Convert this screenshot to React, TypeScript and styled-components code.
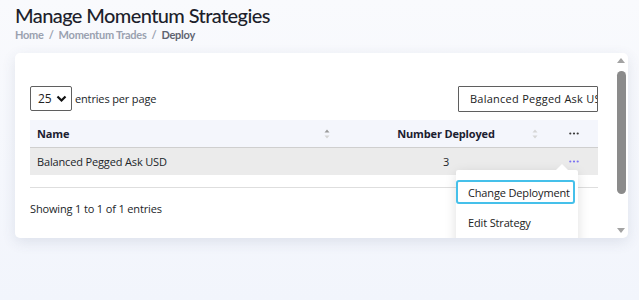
import React from "react";
import styled, { createGlobalStyle } from "styled-components";

const Global = createGlobalStyle`
  html, body { margin: 0; padding: 0; }
  body {
    background: linear-gradient(180deg, #f9fafd 0%, #f2f5fc 100%);
    min-height: 300px;
    font-family: "Open Sans", "Liberation Sans", sans-serif;
    color: #212529;
  }
  * { box-sizing: border-box; }
`;

const Page = styled.div`
  padding: 3px 11px 0 15px;
`;

const Title = styled.h1`
  margin: 0;
  font-family: Lato, "Open Sans", sans-serif;
  font-weight: 500;
  font-size: 20px;
  letter-spacing: -0.6px;
  line-height: 24px;
  color: #1d1f2c;
`;

const Crumbs = styled.nav`
  display: flex;
  gap: 5px;
  margin-top: 1px;
  font-family: Lato, "Open Sans", sans-serif;
  font-size: 11px;
  letter-spacing: -0.25px;
  line-height: 14px;
  color: #959dad;
`;

const Crumb = styled.span<{ $active?: boolean }>`
  color: ${(p) => (p.$active ? "#5e6370" : "#9aa1b0")};
  font-weight: 700;
`;

const Card = styled.section`
  margin-top: 11px;
  width: 613px;
  height: 185px;
  display: flex;
  background: #fff;
  border-radius: 5px;
  box-shadow: 0 4px 14px rgba(60, 72, 110, 0.12);
`;

const CardBody = styled.div`
  flex: 1;
  min-width: 0;
  overflow: hidden;
  padding: 33px 15px 0 15px;
  border-radius: 5px 0 0 5px;
`;

const Scrollbar = styled.div`
  width: 15px;
  flex: none;
  display: flex;
  flex-direction: column;
  align-items: center;
  padding: 5px 0 5px 1px;
`;

const Arrow = styled.div<{ $dir: "up" | "down" }>`
  width: 0;
  height: 0;
  border-left: 4px solid transparent;
  border-right: 4px solid transparent;
  ${(p) =>
    p.$dir === "up"
      ? "border-bottom: 5px solid #a3a3a3;"
      : "border-top: 5px solid #a3a3a3;"}
  margin: ${(p) => (p.$dir === "up" ? "0 0 8px" : "auto 0 0")};
`;

const Thumb = styled.div`
  width: 9px;
  height: 123px;
  border-radius: 5px;
  background: #8b8b8b;
`;

const Toolbar = styled.div`
  display: flex;
  align-items: center;
  justify-content: space-between;
  height: 25px;
`;

const Length = styled.label`
  display: flex;
  align-items: center;
  gap: 3px;
  font-size: 11px;
  letter-spacing: -0.15px;
  color: #212529;
`;

const SelectBox = styled.div`
  display: flex;
  align-items: center;
  justify-content: space-between;
  width: 42px;
  height: 25px;
  padding: 0 4px 0 7px;
  border: 1px solid #5f5f5f;
  border-radius: 2px;
  font-size: 12px;
  color: #222;
`;

const Search = styled.input`
  width: 140px;
  height: 26px;
  padding: 0 0 0 11px;
  border: 1px solid #5f5f5f;
  border-radius: 1px;
  font-family: "Open Sans", "Liberation Sans", sans-serif;
  font-size: 11px;
  letter-spacing: 0.25px;
  color: #222;
  background: #fff;
  outline: none;
`;

const TableWrap = styled.div`
  margin-top: 9px;
  border-bottom: 1px solid #dedede;
  padding-bottom: 12px;
`;

const Grid = styled.div<{ $head?: boolean }>`
  display: grid;
  grid-template-columns: 310px 212px 46px;
  align-items: center;
  height: ${(p) => (p.$head ? "28px" : "27px")};
  background: ${(p) => (p.$head ? "#f4f6fc" : "#ebebeb")};
  border-bottom: ${(p) => (p.$head ? "1px solid #cfcfcf" : "none")};
  font-size: 11px;
  letter-spacing: -0.15px;
  font-weight: ${(p) => (p.$head ? 700 : 400)};
  color: ${(p) => (p.$head ? "#1b2030" : "#212529")};
`;

const Cell = styled.div<{ $align?: "left" | "center" }>`
  position: relative;
  display: flex;
  align-items: center;
  justify-content: ${(p) => (p.$align === "center" ? "center" : "flex-start")};
  padding-left: ${(p) => (p.$align === "center" ? "0" : "7px")};
  height: 100%;
`;

const SortSlot = styled.span<{ $right: number }>`
  position: absolute;
  right: ${(p) => p.$right}px;
  top: 50%;
  transform: translateY(-50%);
  display: flex;
`;

const ActionCell = styled.div`
  position: relative;
  display: flex;
  align-items: center;
  justify-content: flex-end;
  padding-right: 19px;
  height: 100%;
`;

const Menu = styled.div`
  position: absolute;
  top: 22px;
  right: 20px;
  width: 122px;
  padding: 10px 3px 20px 0;
  background: #fff;
  border-radius: 2px;
  box-shadow: 0 3px 12px rgba(0, 0, 0, 0.13);
  z-index: 2;
  &::before {
    content: "";
    position: absolute;
    top: -6px;
    right: 10px;
    border-left: 6px solid transparent;
    border-right: 6px solid transparent;
    border-bottom: 6px solid #fff;
  }
`;

const MenuItem = styled.div<{ $focused?: boolean }>`
  height: 24px;
  display: flex;
  align-items: center;
  padding-left: ${(p) => (p.$focused ? "10px" : "12px")};
  margin-bottom: 6px;
  font-size: 11px;
  letter-spacing: -0.15px;
  color: #222;
  white-space: nowrap;
  border: ${(p) => (p.$focused ? "2px solid #45c0ea" : "none")};
  border-radius: 3px;
`;

const Footer = styled.div`
  margin-top: 13px;
  font-size: 11px;
  letter-spacing: -0.15px;
  color: #212529;
`;

const SortIcon = ({ up, down }: { up: string; down: string }) => (
  <svg width="6" height="12" viewBox="0 0 6 12">
    <path d="M0.5 4.5 L3 1.5 L5.5 4.5 Z" fill={up} />
    <path d="M0.5 7.5 L3 10.5 L5.5 7.5 Z" fill={down} />
  </svg>
);

const DotsIcon = ({ color }: { color: string }) => (
  <svg width="10" height="3" viewBox="0 0 10 3">
    <circle cx="1.3" cy="1.5" r="1.1" fill={color} />
    <circle cx="5" cy="1.5" r="1.1" fill={color} />
    <circle cx="8.7" cy="1.5" r="1.1" fill={color} />
  </svg>
);

const Chevron = () => (
  <svg width="11" height="8" viewBox="0 0 11 8">
    <path d="M1.5 1.5 L5.5 5.5 L9.5 1.5" stroke="#111" strokeWidth="2.2" fill="none" />
  </svg>
);

export default function App() {
  return (
    <>
      <Global />
      <Page>
        <Title>Manage Momentum Strategies</Title>
        <Crumbs>
          <Crumb>Home</Crumb>
          <Crumb>/</Crumb>
          <Crumb>Momentum Trades</Crumb>
          <Crumb>/</Crumb>
          <Crumb $active>Deploy</Crumb>
        </Crumbs>
        <Card>
          <CardBody>
            <Toolbar>
              <Length>
                <SelectBox>
                  <span>25</span>
                  <Chevron />
                </SelectBox>
                entries per page
              </Length>
              <Search readOnly value="Balanced Pegged Ask USD" />
            </Toolbar>
            <TableWrap>
              <Grid $head>
                <Cell>
                  Name
                  <SortSlot $right={10}>
                    <SortIcon up="#9a9a9a" down="#d4d4d4" />
                  </SortSlot>
                </Cell>
                <Cell $align="center">
                  Number Deployed
                  <SortSlot $right={14}>
                    <SortIcon up="#d6d6d6" down="#d6d6d6" />
                  </SortSlot>
                </Cell>
                <ActionCell>
                  <DotsIcon color="#3a3a3a" />
                </ActionCell>
              </Grid>
              <Grid>
                <Cell>Balanced Pegged Ask USD</Cell>
                <Cell $align="center">3</Cell>
                <ActionCell>
                  <DotsIcon color="#7b72f2" />
                  <Menu>
                    <MenuItem $focused>Change Deployment</MenuItem>
                    <MenuItem>Edit Strategy</MenuItem>
                  </Menu>
                </ActionCell>
              </Grid>
            </TableWrap>
            <Footer>Showing 1 to 1 of 1 entries</Footer>
          </CardBody>
          <Scrollbar>
            <Arrow $dir="up" />
            <Thumb />
            <Arrow $dir="down" />
          </Scrollbar>
        </Card>
      </Page>
    </>
  );
}
